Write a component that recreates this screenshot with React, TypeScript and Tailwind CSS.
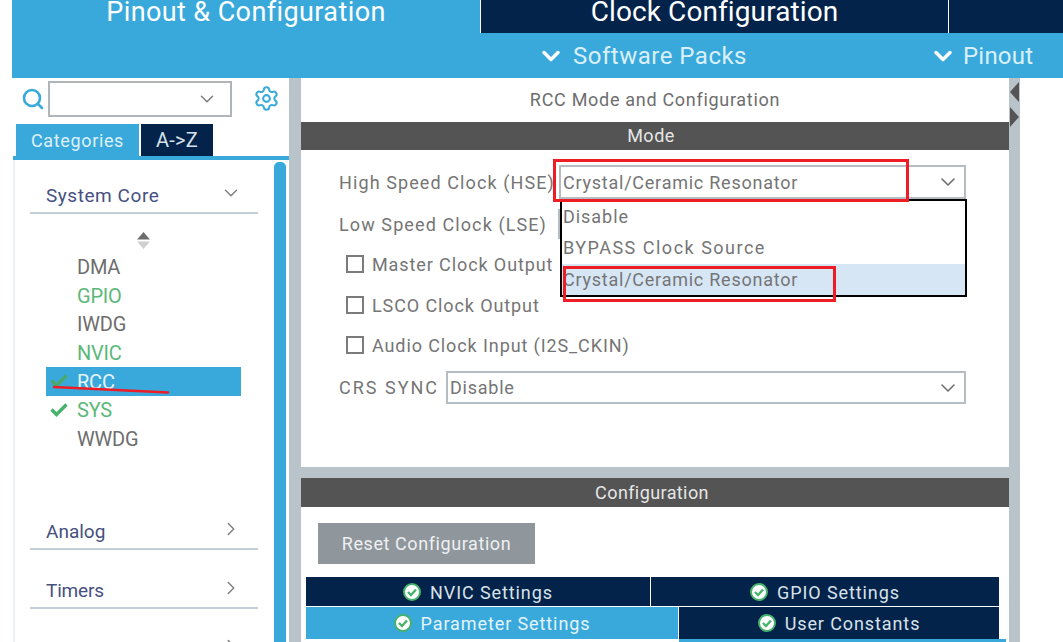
import { ChevronDown, ChevronRight, Search, Settings } from 'lucide-react';

const font = { fontFamily: 'Roboto, "Liberation Sans", sans-serif' };

function Check({ className }: { className: string }) {
  return (
    <svg viewBox="0 0 18 14" className={className} fill="none" stroke="currentColor" strokeWidth="3.4">
      <path d="M1.5 6.5 L6.5 11.5 L16.5 1.5" />
    </svg>
  );
}

function GreenDot() {
  return (
    <svg viewBox="0 0 18 18" className="w-[18px] h-[18px] shrink-0">
      <circle cx="9" cy="9" r="8" fill="#fff" stroke="#45b36b" strokeWidth="2" />
      <path d="M5 9 L8 12 L13 6.5" fill="none" stroke="#45b36b" strokeWidth="2.4" />
    </svg>
  );
}

function Category({ name, open, className }: { name: string; open?: boolean; className: string }) {
  return (
    <div className={`flex items-center justify-between h-[33px] pb-[1px] border-b-2 border-[#c5ced6] ml-[15px] w-[228px] pl-[16px] pr-[18px] shrink-0 ${className}`}>
      <span className="text-[19px] text-[#46507f]">{name}</span>
      {open ? (
        <ChevronDown size={22} strokeWidth={1.6} className="text-[#808080] -mr-[2px] -mt-[6px]" />
      ) : (
        <ChevronRight size={22} strokeWidth={1.6} className="text-[#808080] -mr-[2px] -mt-[6px]" />
      )}
    </div>
  );
}

function Peripheral({ name, green, check, selected }: { name: string; green?: boolean; check?: boolean; selected?: boolean }) {
  return (
    <div className={`flex items-center h-[28.6px] w-[195px] pl-[31px] relative ${selected ? 'bg-[#39a9dc]' : ''}`}>
      {check && <Check className={`absolute left-[4px] top-[7px] w-[18px] h-[14px] ${selected ? 'text-[#4aa86b]' : 'text-[#45b36b]'}`} />}
      <span className={`text-[20px] tracking-[-0.2px] ${selected ? 'text-[#e4f4fb]' : green ? 'text-[#5cb87a]' : 'text-[#6e6e6e]'}`}>{name}</span>
    </div>
  );
}

function CheckRow({ label, className }: { label: string; className: string }) {
  return (
    <div className={`flex items-center ml-[45px] ${className}`}>
      <div className="w-[18px] h-[18px] border-2 border-[#7b7b7b] mr-[8px]" />
      <span className="text-[18px] tracking-[0.9px] text-[#757575]">{label}</span>
    </div>
  );
}

function SelectBox({ value, className }: { value: string; className: string }) {
  return (
    <div className={`flex items-center justify-between border-2 border-[#b5bcc2] pl-[2px] pr-[4px] ${className}`}>
      <span className="text-[18px] tracking-[0.76px] text-[#757575]">{value}</span>
      <ChevronDown size={24} strokeWidth={1.6} className="text-[#6e6e6e]" />
    </div>
  );
}

function SettingsTab({ label, className }: { label: string; className: string }) {
  return (
    <div className={`flex items-center justify-center gap-[9px] ${className}`}>
      <GreenDot />
      <span className="text-[18px] tracking-[0.9px] text-[#d8e2ea]">{label}</span>
    </div>
  );
}

export default function App() {
  return (
    <div className="w-[1063px] h-[642px] overflow-hidden bg-white pl-3 relative" style={font}>
      {/* top bar */}
      <div className="bg-[#39a9dc] h-[78px] flex flex-col">
        <div className="flex h-[33px] shrink-0 bg-white">
          <div className="w-[468px] bg-[#39a9dc] flex justify-center items-center text-white text-[27px] tracking-[0.4px] pb-[9px]">Pinout &amp; Configuration</div>
          <div className="w-[467px] ml-px bg-[#03234b] flex justify-center items-center text-white text-[28px] tracking-[0.1px] pb-[9px]">Clock Configuration</div>
          <div className="flex-1 ml-px bg-[#03234b]" />
        </div>
        <div className="flex-1 flex items-center text-[#d9f0fa] text-[24px] tracking-[0.5px]">
          <ChevronDown size={28} strokeWidth={3} className="ml-[525px] text-white" />
          <span className="ml-[8px]">Software Packs</span>
          <ChevronDown size={28} strokeWidth={3} className="ml-[182px] text-white" />
          <span className="ml-[6px] tracking-[0.2px]">Pinout</span>
        </div>
      </div>

      <div className="flex h-[564px]">
        {/* sidebar */}
        <div className="w-[277px] shrink-0 flex flex-col relative">
          <div className="flex items-center h-[42px] pt-[1px] pb-[2px] shrink-0">
            <Search size={24} strokeWidth={2.6} className="text-[#39a9dc] ml-[9px] shrink-0" />
            <div className="ml-[3px] w-[184px] h-[36px] border-2 border-[#b0b5b9] flex items-center justify-end pr-[12px]">
              <ChevronDown size={22} strokeWidth={1.6} className="text-[#7d7d7d]" />
            </div>
            <Settings size={27} strokeWidth={1.8} className="text-[#39a9dc] ml-[21px]" />
          </div>
          <div className="flex ml-[4px] mt-[4px] h-[32px] shrink-0">
            <div className="w-[123px] bg-[#39a9dc] text-[#dff1fa] text-[18px] tracking-[0.65px] flex items-center justify-center">Categories</div>
            <div className="w-[72px] ml-[2px] bg-[#03234b] text-[#d8e2ea] text-[20px] tracking-[0.3px] flex items-center justify-center">A-&gt;Z</div>
          </div>
          <div className="h-[4px] bg-[#39a9dc] ml-px shrink-0" />
          <div className="flex-1 min-h-0 flex ml-px border-l-[2px] border-[#edf0f5] relative overflow-hidden">
            <div className="flex-1 flex flex-col">
              <Category name="System Core" open className="mt-[21px] tracking-[0.55px]" />
              <div className="flex justify-center w-[258px] mt-[18px] ml-[1px] shrink-0">
                <svg viewBox="0 0 12 16" className="w-[13px] h-[17px] -ml-[4px]">
                  <path d="M6 0 L12 7 L0 7 Z" fill="#6e6e6e" />
                  <path d="M6 16 L12 9 L0 9 Z" fill="#cfcfcf" />
                </svg>
              </div>
              <div className="mt-[4px] ml-[31px] flex flex-col shrink-0">
                <Peripheral name="DMA" />
                <Peripheral name="GPIO" green />
                <Peripheral name="IWDG" />
                <Peripheral name="NVIC" green />
                <Peripheral name="RCC" check selected />
                <Peripheral name="SYS" green check />
                <Peripheral name="WWDG" />
              </div>
              <Category name="Analog" className="mt-[64px]" />
              <Category name="Timers" className="mt-[26px] tracking-[-0.2px]" />
              <Category name="Connectivity" className="mt-[25px]" />
            </div>
            <div className="w-[12px] bg-[#39a9dc] rounded-t-[5px] mt-[2px] mr-[3px] shrink-0" />
          </div>
        </div>

        <div className="w-[12px] bg-[#b8c4ca] shrink-0" />

        {/* main column */}
        <div className="w-[708px] shrink-0 flex flex-col">
          <div className="h-[389px] shrink-0 flex flex-col">
            <div className="h-[44px] pb-[2px] flex items-center justify-center text-[18px] tracking-[0.7px] text-[#6e6e6e]">RCC Mode and Configuration</div>
            <div className="h-[28px] pb-[2px] bg-[#535453] flex items-center justify-center text-[#e6e6e6] text-[18px] tracking-[0.5px] pr-[8px]">Mode</div>
            <div className="flex items-center mt-[15px]">
              <span className="ml-[38px] w-[220px] text-[18px] tracking-[1.1px] text-[#757575] whitespace-nowrap">High Speed Clock (HSE)</span>
              <SelectBox value="Crystal/Ceramic Resonator" className="w-[407px] h-[34px]" />
            </div>
            <div className="flex items-center mt-[8px] h-[34px]">
              <span className="ml-[38px] w-[219px] text-[18px] tracking-[1.1px] text-[#757575] whitespace-nowrap">Low Speed Clock (LSE)</span>
              <div className="h-[30px] w-[2px] bg-[#b5bcc2]" />
            </div>
            <CheckRow label="Master Clock Output" className="mt-[8px] h-[30px]" />
            <CheckRow label="LSCO Clock Output" className="mt-[11px] h-[30px]" />
            <CheckRow label="Audio Clock Input (I2S_CKIN)" className="mt-[10px] h-[30px]" />
            <div className="flex items-center mt-[11px]">
              <span className="ml-[38px] w-[107px] text-[18px] tracking-[2px] text-[#757575] whitespace-nowrap">CRS SYNC</span>
              <SelectBox value="Disable" className="w-[520px] h-[33px]" />
            </div>
          </div>

          <div className="h-[11px] bg-[#b8c4ca] shrink-0" />
          <div className="h-[29px] bg-[#535453] flex items-center justify-center text-[#e6e6e6] text-[18px] tracking-[0.4px] pr-[6px] shrink-0">Configuration</div>
          <div className="w-[217px] h-[41px] bg-[#8f969c] ml-[17px] mt-[16px] flex items-center justify-center text-[#eef0f2] text-[18px] tracking-[0.58px] shrink-0">Reset Configuration</div>
          <div className="ml-[5px] mt-[13px] flex flex-col gap-px w-[693px]">
            <div className="flex gap-px h-[29px]">
              <SettingsTab label="NVIC Settings" className="w-[344px] bg-[#03234b] pt-[1px]" />
              <SettingsTab label="GPIO Settings" className="flex-1 bg-[#03234b] pt-[1px]" />
            </div>
            <div className="flex gap-px h-[32px]">
              <SettingsTab label="Parameter Settings" className="w-[372px] bg-[#39a9dc] [&>span]:text-[#e4f4fb]" />
              <SettingsTab label="User Constants" className="flex-1 bg-[#03234b]" />
            </div>
            <div className="h-[3px] -mt-px ml-[373px] w-[327px] bg-[#39a9dc]" />
          </div>
        </div>

        {/* right gutter with the collapse arrows */}
        <div className="w-[11px] bg-[#b8c4ca] shrink-0 flex flex-col items-center pt-[4px] gap-[5px]">
          <svg viewBox="0 0 11 20" className="w-[11px] h-[20px]"><path d="M10 0 L10 20 L1 10 Z" fill="#535453" /></svg>
          <svg viewBox="0 0 11 20" className="w-[11px] h-[20px]"><path d="M1 0 L1 20 L10 10 Z" fill="#535453" /></svg>
        </div>
      </div>

      {/* open dropdown */}
      <div className="absolute left-[560px] top-[199px] w-[407px] h-[98px] bg-white border-2 border-black flex flex-col text-[18px] text-[#757575]">
        <div className="h-[32px] flex items-center pl-[1px] tracking-[0.95px]">Disable</div>
        <div className="h-[32px] flex items-center pl-[1px] tracking-[1.5px]">BYPASS Clock Source</div>
        <div className="h-[32px] flex items-center pl-[1px] tracking-[0.76px] bg-[#d6e6f5]">Crystal/Ceramic Resonator</div>
      </div>

      {/* red annotations */}
      <div className="absolute left-[553px] top-[159px] w-[356px] h-[43px] border-[3px] border-[#ee1c25]" />
      <div className="absolute left-[563px] top-[266px] w-[273px] h-[36px] border-[3px] border-[#ee1c25]" />
      <svg className="absolute left-[50px] top-[384px]" width="122" height="12" viewBox="0 0 122 12">
        <path d="M4 3 L118 8.5" stroke="#ee1c25" strokeWidth="2.4" strokeLinecap="round" />
      </svg>
    </div>
  );
}
